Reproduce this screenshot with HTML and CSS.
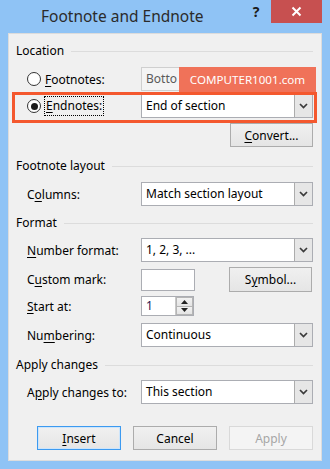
FILE: index.html
```html
<!DOCTYPE html>
<html>
<head>
<meta charset="utf-8">
<link rel="stylesheet" href="styles.css">
</head>
<body>
<div class="window">
  <div class="titlebar">
    <div class="title">Footnote and Endnote</div>
    <div class="help">?</div>
    <div class="close"><svg width="11" height="11" viewBox="0 0 11 11"><path d="M1.5 1.5 L9.5 9.5 M9.5 1.5 L1.5 9.5" stroke="#fff" stroke-width="2" fill="none"/></svg></div>
  </div>
  <div class="client">
    <div class="group-head"><span>Location</span><i class="rule"></i></div>
    <div class="row r-foot">
      <div class="lbl"><span class="radio"></span><span><u>F</u>ootnotes:</span></div>
      <div class="combo disabled"><span class="val">Botto</span><span class="fill"></span><span class="drop"><svg width="9" height="6" viewBox="0 0 9 6"><path d="M1 1 L4.5 4.5 L8 1" stroke="#8a8a8a" stroke-width="1.7" fill="none"/></svg></span></div>
    </div>
    <div class="row r-end">
      <div class="lbl"><span class="radio checked"></span><span class="focus"><u>E</u>ndnotes:</span></div>
      <div class="combo"><span class="val">End of section</span><span class="drop"><svg width="9" height="6" viewBox="0 0 9 6"><path d="M1 1 L4.5 4.5 L8 1" stroke="#3a3a3a" stroke-width="1.7" fill="none"/></svg></span></div>
    </div>
    <div class="row r-conv">
      <div class="btn side"><u>C</u>onvert...</div>
    </div>

    <div class="group-head h2"><span>Footnote layout</span><i class="rule"></i></div>
    <div class="row r-cols">
      <div class="lbl">C<u>o</u>lumns:</div>
      <div class="combo"><span class="val">Match section layout</span><span class="drop"><svg width="9" height="6" viewBox="0 0 9 6"><path d="M1 1 L4.5 4.5 L8 1" stroke="#3a3a3a" stroke-width="1.7" fill="none"/></svg></span></div>
    </div>

    <div class="group-head h3"><span>Format</span><i class="rule"></i></div>
    <div class="row r-num">
      <div class="lbl"><u>N</u>umber format:</div>
      <div class="combo"><span class="val">1, 2, 3, ...</span><span class="drop"><svg width="9" height="6" viewBox="0 0 9 6"><path d="M1 1 L4.5 4.5 L8 1" stroke="#3a3a3a" stroke-width="1.7" fill="none"/></svg></span></div>
    </div>
    <div class="row r-mark">
      <div class="lbl">C<u>u</u>stom mark:</div>
      <div class="textbox"></div>
      <div class="btn side sym">S<u>y</u>mbol...</div>
    </div>
    <div class="row r-start">
      <div class="lbl"><u>S</u>tart at:</div>
      <div class="spin">
        <span class="spin-val">1</span>
        <span class="spin-btns">
          <span class="sb"><svg width="7" height="4" viewBox="0 0 7 4"><path d="M0 4 L3.5 0 L7 4 Z" fill="#222"/></svg></span>
          <span class="sb"><svg width="7" height="4" viewBox="0 0 7 4"><path d="M0 0 L3.5 4 L7 0 Z" fill="#222"/></svg></span>
        </span>
      </div>
    </div>
    <div class="row r-numb">
      <div class="lbl">Nu<u>m</u>bering:</div>
      <div class="combo"><span class="val">Continuous</span><span class="drop"><svg width="9" height="6" viewBox="0 0 9 6"><path d="M1 1 L4.5 4.5 L8 1" stroke="#3a3a3a" stroke-width="1.7" fill="none"/></svg></span></div>
    </div>

    <div class="group-head h4"><span>Apply changes</span><i class="rule"></i></div>
    <div class="row r-apply">
      <div class="lbl">A<u>p</u>ply changes to:</div>
      <div class="combo"><span class="val">This section</span><span class="drop"><svg width="9" height="6" viewBox="0 0 9 6"><path d="M1 1 L4.5 4.5 L8 1" stroke="#3a3a3a" stroke-width="1.7" fill="none"/></svg></span></div>
    </div>

    <div class="buttons">
      <div class="btn default"><u>I</u>nsert</div>
      <div class="btn">Cancel</div>
      <div class="btn off">Apply</div>
    </div>
  </div>
  <div class="highlight"></div>
  <div class="watermark">COMPUTER1001.com</div>
</div>
</body>
</html>
```
FILE: styles.css
```css
* { box-sizing: border-box; }
html, body { margin: 0; padding: 0; }
body {
  width: 330px;
  height: 469px;
  overflow: hidden;
  background: #8fc3f5;
  font-family: "Noto Sans", "Open Sans", sans-serif;
  font-size: 12px;
  color: #000;
}
.window {
  position: relative;
  width: 330px;
  height: 469px;
}
.titlebar {
  display: flex;
  height: 33px;
  align-items: flex-start;
}
.title {
  flex: 1;
  padding-left: 41px;
  padding-top: 5px;
  font-size: 15.5px;
  color: #2b2b2b;
  line-height: 22px;
}
.help {
  width: 18px;
  margin-top: 3px;
  margin-right: 6px;
  font-size: 14px;
  font-weight: bold;
  color: #1a1a1a;
  line-height: 18px;
  text-align: center;
}
.close {
  width: 51px;
  height: 23px;
  margin-right: 8px;
  background: #c75050;
  display: flex;
  align-items: center;
  justify-content: center;
}
.client {
  margin: 0 8px;
  height: 428px;
  background: #f0f0f0;
  border: 1px solid #dcdcdc;
  padding: 9px 8px 0 7px;
  display: flex;
  flex-direction: column;
}
.group-head {
  display: flex;
  align-items: center;
  height: 16px;
  line-height: 16px;
  color: #000;
}
.group-head .rule {
  flex: 1;
  height: 1px;
  background: #dcdcdc;
  margin-left: 7px;
  margin-top: 1px;
}
.row {
  display: flex;
  align-items: center;
  padding-left: 11px;
  height: 24px;
}
.lbl {
  width: 114px;
  display: flex;
  align-items: center;
  white-space: nowrap;
}
u { text-decoration: underline; text-underline-offset: 2px; }
.radio {
  width: 14px;
  height: 14px;
  border-radius: 50%;
  border: 1px solid #333;
  background: #fff;
  margin-right: 4px;
  display: flex;
  align-items: center;
  justify-content: center;
}
.radio.checked::after {
  content: "";
  width: 7px;
  height: 7px;
  border-radius: 50%;
  background: #1a1a1a;
}
.focus {
  outline: 1px dotted #000;
  outline-offset: 0;
  padding: 1px 1px;
  line-height: 16px;
}
.combo {
  width: 172px;
  height: 24px;
  background: #fff;
  border: 1px solid #abadb3;
  display: flex;
}
.combo .val {
  flex: 1;
  padding-left: 4px;
  line-height: 22px;
  white-space: nowrap;
  overflow: hidden;
}
.combo .drop {
  width: 18px;
  background: #e6e6e6;
  border-left: 1px solid #acacac;
  display: flex;
  align-items: center;
  justify-content: center;
}
.combo.disabled { background: #f4f4f4; border-color: #cfcfcf; color: #5a5a5a; }
.combo.disabled .val { flex: none; }
.combo.disabled .fill { flex: 1; }
.combo.disabled .drop { background: #efefef; border-left-color: #d5d5d5; }

.r-foot { margin-top: 8px; }
.r-end { margin-top: 3px; }
.r-conv { margin-top: 5px; justify-content: flex-end; }
.h2 { margin-top: 11px; }
.r-cols { margin-top: 8px; }
.h3 { margin-top: 9px; }
.r-num { margin-top: 7px; }
.r-mark { margin-top: 5px; height: 25px; }
.r-start { margin-top: 4px; height: 20px; }
.r-numb { margin-top: 7px; }
.h4 { margin-top: 10px; }
.r-apply { margin-top: 7px; }

.btn {
  width: 84px;
  height: 24px;
  border: 1px solid #acacac;
  background: linear-gradient(#f0f0f0, #e5e5e5);
  display: flex;
  align-items: center;
  justify-content: center;
  white-space: nowrap;
}
.btn.side { width: 83px; }
.sym { height: 25px; margin-left: 34px; }
.btn.default {
  border-color: #3c9af0;
  box-shadow: inset 0 0 0 1px #cde5fb;
}
.btn.off {
  border-color: #d9d9d9;
  background: #f4f4f4;
  color: #a6a6a6;
}
.textbox {
  width: 54px;
  height: 22px;
  background: #fff;
  border: 1px solid #abadb3;
}
.spin {
  width: 53px;
  height: 20px;
  display: flex;
  border: 1px solid #abadb3;
  background: #fff;
}
.spin-val {
  flex: 1;
  padding-left: 4px;
  line-height: 18px;
  color: #2a1650;
}
.spin-btns {
  width: 18px;
  display: flex;
  flex-direction: column;
  border-left: 1px solid #c8c8c8;
}
.sb {
  flex: 1;
  display: flex;
  align-items: center;
  justify-content: center;
  background: linear-gradient(#f2f2f2, #e4e4e4);
  border: 1px solid #b5b5b5;
}
.sb + .sb { border-top: none; }
.buttons {
  display: flex;
  justify-content: flex-end;
  gap: 12px;
  margin-top: 22px;
}
.highlight {
  position: absolute;
  left: 12px;
  top: 92px;
  width: 305px;
  height: 31px;
  border: 3px solid #f4582e;
}
.watermark {
  position: absolute;
  left: 179px;
  top: 67px;
  width: 137px;
  height: 25px;
  background: #f07259;
  color: #fff;
  font-size: 11.6px;
  letter-spacing: 0;
  line-height: 25px;
  text-align: center;
}
```
